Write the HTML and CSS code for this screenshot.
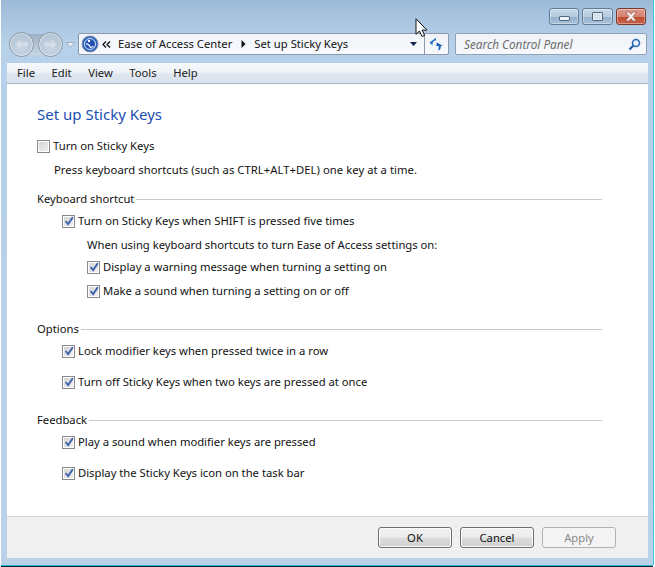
FILE: index.html
```html
<!DOCTYPE html>
<html lang="en">
<head>
<meta charset="utf-8">
<title>Set up Sticky Keys</title>
<link rel="stylesheet" href="styles.css">
</head>
<body>
<div class="window">
  <div class="caption">
    <button class="cap cap-min" aria-label="Minimize"><span class="glyph-min"></span></button>
    <button class="cap cap-max" aria-label="Maximize"><span class="glyph-max"></span></button>
    <button class="cap cap-close" aria-label="Close"><svg width="16" height="11" viewBox="0 0 16 11"><path d="M2.500 1h3.500l2 2.300L10 1h3.500l-3.500 4.500 3.500 4.500H10L8 7.700 6 10H2.500L6 5.500z" fill="#f6efed" stroke="#8a4436" stroke-width=".6"/></svg></button>
  </div>
  <div class="navbar">
    <div class="navbtns">
      <span class="navbtn"><svg width="19" height="19" viewBox="0 0 19 19"><path d="M3 9.500l6-5.500v3.300h7v4.400H9V15z" fill="#d5dfe9" stroke="#c0ccd8" stroke-width=".8"/></svg></span>
      <span class="navbtn"><svg width="19" height="19" viewBox="0 0 19 19"><path d="M16 9.500L10 4v3.300H3v4.400h7V15z" fill="#d5dfe9" stroke="#c0ccd8" stroke-width=".8"/></svg></span>
    </div>
    <svg class="navdrop" width="9" height="6" viewBox="0 0 9 6"><path d="M.5.500h8L4.500 5.500z" fill="#e6edf4" stroke="#9fb0c1"/></svg>
    <div class="address">
      <svg class="cp-icon" width="18" height="18" viewBox="0 0 18 18"><circle cx="9" cy="9" r="8" fill="#2f63c5" stroke="#7c8ca3"/><circle cx="9" cy="9" r="5.500" fill="#1e4fb3" stroke="#dfe8f7"/><circle cx="8" cy="6" r="1.300" fill="#fff"/><path d="M5 8.500l3 1.500 1.500 2.500 3-1" fill="none" stroke="#fff" stroke-width="1.300"/></svg>
      <svg class="crumb-start" width="9" height="7" viewBox="0 0 9 7"><path d="M4 .5L1 3.500 4 6.500M8 .5L5 3.500 8 6.500" fill="none" stroke="#111" stroke-width="1.300"/></svg>
      <span class="crumb">Ease of Access Center</span>
      <svg class="crumb-sep" width="5" height="8" viewBox="0 0 5 8"><path d="M.5 0l4 4-4 4z" fill="#111"/></svg>
      <span class="crumb">Set up Sticky Keys</span>
      <svg class="addr-drop" width="7" height="4" viewBox="0 0 7 4"><path d="M0 0h7L3.500 4z" fill="#14204e"/></svg>
      <span class="refresh"><svg width="15" height="14" viewBox="0 0 15 14"><path d="M3.500 8.500C3.200 5.500 4.500 3.500 7 3.200V.8l0 0L.5 5.500 3.500 8.500z" fill="#2b72c4"/><path d="M8 5.500l6 3.500h-2.200c.2 2.200-.6 4-2.800 4.500.7-1.300.8-3 .5-4.500H7z" fill="#1f62b3"/></svg></span>
    </div>
    <div class="search">
      <span class="search-text">Search Control Panel</span>
      <svg width="13" height="13" viewBox="0 0 13 13"><circle cx="8" cy="5" r="3.500" fill="#e4f0fb" stroke="#2a6ab5" stroke-width="1.600"/><path d="M5.200 7.800L1.500 11.500" stroke="#1f5da8" stroke-width="2.200"/></svg>
    </div>
  </div>
  <div class="panel">
    <div class="menubar">
      <span class="menu">File</span><span class="menu">Edit</span><span class="menu">View</span><span class="menu">Tools</span><span class="menu">Help</span>
    </div>
    <main class="content">
      <h1 class="title">Set up Sticky Keys</h1>
      <label class="row row-top"><span class="check"></span>Turn on Sticky Keys</label>
      <p class="note">Press keyboard shortcuts (such as CTRL+ALT+DEL) one key at a time.</p>

      <h2 class="group group-first"><span>Keyboard shortcut</span></h2>
      <label class="row lvl1 r-first"><span class="check on"><svg viewBox="0 0 9 9"><path d="M1.500 4.500l2.200 2.800L8 1" fill="none" stroke="#3f66ad" stroke-width="1.700"/></svg></span>Turn on Sticky Keys when SHIFT is pressed five times</label>
      <p class="sub">When using keyboard shortcuts to turn Ease of Access settings on:</p>
      <label class="row lvl2 r-tight"><span class="check on"><svg viewBox="0 0 9 9"><path d="M1.500 4.500l2.200 2.800L8 1" fill="none" stroke="#3f66ad" stroke-width="1.700"/></svg></span>Display a warning message when turning a setting on</label>
      <label class="row lvl2 r-close"><span class="check on"><svg viewBox="0 0 9 9"><path d="M1.500 4.500l2.200 2.800L8 1" fill="none" stroke="#3f66ad" stroke-width="1.700"/></svg></span>Make a sound when turning a setting on or off</label>

      <h2 class="group group-next"><span>Options</span></h2>
      <label class="row lvl1 r-first"><span class="check on"><svg viewBox="0 0 9 9"><path d="M1.500 4.500l2.200 2.800L8 1" fill="none" stroke="#3f66ad" stroke-width="1.700"/></svg></span>Lock modifier keys when pressed twice in a row</label>
      <label class="row lvl1 r-wide"><span class="check on"><svg viewBox="0 0 9 9"><path d="M1.500 4.500l2.200 2.800L8 1" fill="none" stroke="#3f66ad" stroke-width="1.700"/></svg></span>Turn off Sticky Keys when two keys are pressed at once</label>

      <h2 class="group group-next"><span>Feedback</span></h2>
      <label class="row lvl1 r-first"><span class="check on"><svg viewBox="0 0 9 9"><path d="M1.500 4.500l2.200 2.800L8 1" fill="none" stroke="#3f66ad" stroke-width="1.700"/></svg></span>Play a sound when modifier keys are pressed</label>
      <label class="row lvl1 r-wide"><span class="check on"><svg viewBox="0 0 9 9"><path d="M1.500 4.500l2.200 2.800L8 1" fill="none" stroke="#3f66ad" stroke-width="1.700"/></svg></span>Display the Sticky Keys icon on the task bar</label>
    </main>
    <footer class="footer">
      <button class="btn">OK</button>
      <button class="btn">Cancel</button>
      <button class="btn btn-off">Apply</button>
    </footer>
  </div>
</div>
<svg class="cursor" width="14" height="21" viewBox="0 0 14 21"><path d="M1 .8v15.500l3.500-3.300 2.500 5.500 2.600-1.100-2.500-5.300h4.800z" fill="#fff" stroke="#111" stroke-width="1"/></svg>
</body>
</html>
```

FILE: styles.css
```css
* { box-sizing: border-box; }
html, body { margin: 0; padding: 0; }
body {
  width: 655px;
  height: 567px;
  overflow: hidden;
  background: #fff;
  font-family: "Noto Sans", "Open Sans", sans-serif;
  font-size: 11.25px;
  color: #111;
  position: relative;
}
.window {
  width: 652px;
  height: 565px;
  margin-left: 1px;
  padding: 0 5px 7px 6px;
  display: flex;
  flex-direction: column;
  background: linear-gradient(#9cbad6 0, #a9c5e0 20px, #b8d1ea 45px, #b9d2ea 100%);
  box-shadow: 1px 0 0 #3cc3dc, 0 1px 0 #2fb8d2, 0 2px 0 #0c1c28;
}
.caption {
  height: 27px;
  padding-top: 8px;
  padding-right: 2px;
  display: flex;
  justify-content: flex-end;
  gap: 3px;
}
.cap {
  height: 17px;
  padding: 0;
  border: 1px solid #5f7c98;
  border-radius: 3px;
  display: flex;
  align-items: center;
  justify-content: center;
  background: linear-gradient(#c9d9e9 0, #b6cbe0 50%, #94afca 52%, #a9c3dc 100%);
  box-shadow: inset 0 0 0 1px rgba(255,255,255,.35);
}
.cap-min { width: 30px; }
.cap-max { width: 31px; }
.cap-close { width: 30px; border-color: #7b3b30; background: linear-gradient(#dd9b8e 0, #d5816f 50%, #bf4a2e 52%, #c9644e 100%); }
.glyph-min { width: 11px; height: 5px; margin-top: 4px; background: #eef3f8; border: 1px solid #50677f; border-radius: 1px; }
.glyph-max { width: 11px; height: 9px; background: #d5e0ea; border: 2px solid #e8eef4; outline: 1px solid #50677f; outline-offset: -1px; border-radius: 1px; }
.navbar {
  height: 27px;
  margin-top: 4px;
  display: flex;
  align-items: center;
}
.navbtns {
  width: 54px;
  height: 25px;
  margin-left: 2px;
  display: flex;
  gap: 4px;
  background: linear-gradient(#9db0c3, #c9d6e3) center / 24px 21px no-repeat;
}
.navbtn {
  width: 25px;
  height: 25px;
  border: 1px solid #8a98a6;
  border-radius: 50%;
  background: radial-gradient(circle at 50% 65%, #c9d7e5 0, #b4c5d6 70%, #a3b4c5 100%);
  display: flex;
  align-items: center;
  justify-content: center;
  box-shadow: inset 0 0 0 1px rgba(255,255,255,.55);
}
.navdrop { margin-left: 3px; }
.address {
  width: 371px;
  height: 22px;
  margin-left: 3px;
  margin-bottom: 1px;
  display: flex;
  align-items: center;
  background: linear-gradient(#f0f4f9, #f7f9fc);
  border: 1px solid #8b9aab;
  border-radius: 2px;
  padding-left: 2px;
}
.cp-icon { flex: none; }
.crumb-start { margin-left: 3px; }
.crumb { margin-left: 7px; line-height: 20px; }
.crumb-sep { margin-left: 9px; margin-right: 1px; }
.addr-drop { margin-left: auto; margin-right: 7px; }
.refresh {
  width: 24px;
  height: 20px;
  border-left: 1px solid #8b9aab;
  display: flex;
  align-items: center;
  justify-content: center;
}
.search {
  width: 192px;
  height: 22px;
  margin-left: 6px;
  margin-bottom: 1px;
  padding: 0 5px 0 8px;
  display: flex;
  align-items: center;
  justify-content: space-between;
  background: linear-gradient(#eff3f8, #f6f8fb);
  border: 1px solid #8fa2b6;
  border-radius: 2px;
}
.search-text { font-style: italic; font-size: 11.750px; color: #6d6d6d; }
.panel {
  flex: 1;
  margin-top: 5px;
  display: flex;
  flex-direction: column;
  min-height: 0;
}
.menubar {
  height: 21px;
  display: flex;
  align-items: center;
  padding-left: 10px;
  gap: 16.500px;
  background: linear-gradient(#f6f9fc 0, #eef2f7 45%, #dfe7f0 55%, #d8e2ed 100%);
  border-bottom: 1px solid #a7b6c6;
}
.menu { line-height: 18px; color: #222; }
.content {
  flex: 1;
  background: #fff;
  padding: 0 46px 0 30px;
  min-height: 0;
}
.title {
  margin: 19px 0 0;
  font-size: 15px;
  font-weight: 400;
  line-height: 22px;
  color: #1c4fb0;
}
.row {
  display: flex;
  align-items: center;
  height: 20px;
  line-height: 20px;
}
.row-top { margin-top: 11px; }
.lvl1 { padding-left: 25px; }
.lvl2 { padding-left: 50px; }
.check {
  flex: none;
  width: 13px;
  height: 13px;
  margin-right: 3px;
  border: 1px solid #8a8a8a;
  background: linear-gradient(135deg, #d2d2d2, #f2f2f2);
  box-shadow: inset 0 0 0 1px #fff;
  display: flex;
  align-items: center;
  justify-content: center;
}
.check svg { width: 10px; height: 10px; display: block; }
.note { margin: 4px 0 0 17px; line-height: 20px; height: 20px; letter-spacing: .05px; }
.group {
  display: flex;
  align-items: center;
  margin: 0;
  height: 20px;
  font-size: inherit;
  font-weight: 400;
  line-height: 20px;
}
.group::after { content: ""; flex: 1; height: 1px; margin-left: 2px; background: #c9c9c9; }
.group-first { margin-top: 9px; }
.group-next { margin-top: 18px; }
.r-first { margin-top: 2px; }
.r-wide { margin-top: 11px; }
.r-tight { margin-top: 2px; }
.r-close { margin-top: 4px; }
.sub { margin: 4px 0 0 50px; height: 20px; line-height: 20px; }
.footer {
  height: 42px;
  display: flex;
  align-items: center;
  justify-content: flex-end;
  gap: 8px;
  padding-right: 32px;
  background: #f0f0f0;
  border-top: 1px solid #cfcfcf;
}
.btn {
  width: 74px;
  height: 21px;
  padding: 0;
  font: inherit;
  color: #111;
  border: 1px solid #707070;
  border-radius: 3px;
  background: linear-gradient(#f2f2f2 0, #ebebeb 48%, #dddddd 52%, #cfcfcf 100%);
  box-shadow: inset 0 0 0 1px #fbfbfb;
}
.btn-off { color: #8a8a8a; border-color: #adb2b5; background: #f4f4f4; box-shadow: none; }
.cursor { position: absolute; left: 415px; top: 18px; }
```
